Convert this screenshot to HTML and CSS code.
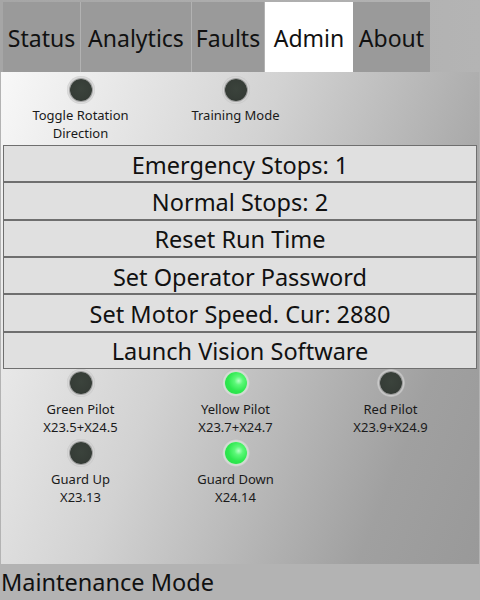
FILE: index.html
```html
<!DOCTYPE html>
<html>
<head>
<meta charset="utf-8">
<link rel="stylesheet" href="styles.css">
</head>
<body>
<div class="window">
  <nav class="tabs">
    <div class="tab tab-status">Status</div>
    <div class="tab tab-analytics">Analytics</div>
    <div class="tab tab-faults">Faults</div>
    <div class="tab tab-admin active">Admin</div>
    <div class="tab tab-about">About</div>
  </nav>
  <main class="panel">
    <div class="grid toggles">
      <div class="item">
        <span class="led off"></span>
        <span class="label">Toggle Rotation<br>Direction</span>
      </div>
      <div class="item">
        <span class="led off"></span>
        <span class="label">Training Mode</span>
      </div>
    </div>
    <div class="buttons">
      <div class="btn">Emergency Stops: 1</div>
      <div class="btn">Normal Stops: 2</div>
      <div class="btn">Reset Run Time</div>
      <div class="btn">Set Operator Password</div>
      <div class="btn">Set Motor Speed. Cur: 2880</div>
      <div class="btn">Launch Vision Software</div>
    </div>
    <div class="grid indicators">
      <div class="item">
        <span class="led off"></span>
        <span class="label">Green Pilot<br>X23.5+X24.5</span>
      </div>
      <div class="item">
        <span class="led on"></span>
        <span class="label">Yellow Pilot<br>X23.7+X24.7</span>
      </div>
      <div class="item">
        <span class="led off"></span>
        <span class="label">Red Pilot<br>X23.9+X24.9</span>
      </div>
      <div class="item">
        <span class="led off"></span>
        <span class="label">Guard Up<br>X23.13</span>
      </div>
      <div class="item">
        <span class="led on"></span>
        <span class="label">Guard Down<br>X24.14</span>
      </div>
    </div>
  </main>
  <footer class="status">Maintenance Mode</footer>
</div>
</body>
</html>
```
FILE: styles.css
```css
* { box-sizing: border-box; }
html, body {
  margin: 0;
  padding: 0;
}
body {
  width: 480px;
  height: 600px;
  overflow: hidden;
  background: #b3b3b3;
  font-family: "Noto Sans", "Open Sans", sans-serif;
  color: #111;
}
.window {
  display: flex;
  flex-direction: column;
  height: 600px;
}
.tabs {
  display: flex;
  height: 72px;
  padding: 2px 0 0 3px;
  background: linear-gradient(90deg, #a6a6a6, #b4b4b4);
  flex: none;
}
.tab {
  height: 70px;
  background: #9a9a9a;
  border-right: 1px solid #b2b2b2;
  display: flex;
  align-items: center;
  justify-content: center;
  font-size: 23px;
  padding-top: 2px;
}
.tab-status { width: 78px; }
.tab-analytics { width: 111px; }
.tab-faults { width: 73px; }
.tab-admin { width: 88px; }
.tab-about { width: 77px; border-right: none; }
.tab.active { background: #ffffff; border-right: none; }
.panel {
  height: 492px;
  margin: 0 1px;
  background: linear-gradient(112deg, #f8f8f8 0%, #d2d2d2 42%, #a0a0a0 82%, #999999 100%);
  display: flex;
  flex-direction: column;
}
.grid {
  display: grid;
  grid-template-columns: 155px 155px 155px;
  padding-left: 2px;
}
.toggles {
  padding-top: 4px;
  height: 73px;
}
.indicators {
  row-gap: 3px;
}
.item {
  display: flex;
  flex-direction: column;
  align-items: center;
}
.led {
  width: 28px;
  height: 28px;
  border-radius: 50%;
  position: relative;
  background: radial-gradient(circle, rgba(255,255,255,0.85) 55%, rgba(180,180,180,0.6) 72%, rgba(200,200,200,0) 100%);
}
.led::after {
  content: "";
  position: absolute;
  left: 3px;
  top: 3px;
  width: 22px;
  height: 22px;
  border-radius: 50%;
}
.led.off::after {
  background: radial-gradient(circle at 50% 45%, #3b433c 0%, #363d37 60%, #2a2f2b 100%);
  box-shadow: 0 0 1px 1px rgba(60,60,60,0.5);
}
.led.on::after {
  background: radial-gradient(circle at 62% 40%, #b8ffc6 0%, #5cf878 22%, #2ee84f 55%, #27d845 100%);
  box-shadow: 0 0 1px 1px rgba(150,200,150,0.4);
}
.label {
  margin-top: 3px;
  font-size: 13px;
  line-height: 18px;
  text-align: center;
  color: #1a1a1a;
}
.toggles .label { margin-top: 2px; }
.buttons {
  margin: 0 2px;
  display: flex;
  flex-direction: column;
}
.btn {
  height: 37.33px;
  background: #e0e0e0;
  border: 1px solid #6f6f6f;
  display: flex;
  align-items: center;
  justify-content: center;
  font-size: 23.5px;
  padding-top: 2px;
  color: #111;
}
.status {
  flex: none;
  height: 36px;
  padding-left: 1px;
  font-size: 23.5px;
  line-height: 36px;
  background: #b3b3b3;
  color: #111;
}
```
